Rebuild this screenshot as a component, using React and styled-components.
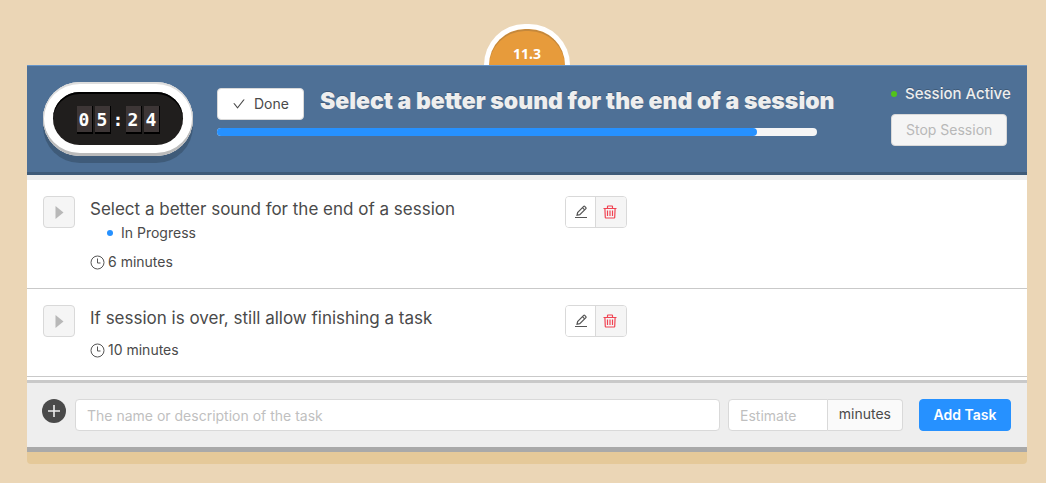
import React from "react";
import styled, { createGlobalStyle, css } from "styled-components";
import { AiOutlineCheck } from "react-icons/ai";

const GlobalStyle = createGlobalStyle`
  *, *::before, *::after { box-sizing: border-box; }
  body {
    margin: 0;
    background: #ebd6b6;
    color: #4a4a4a;
    font: 14px/22px Inter, "Liberation Sans", sans-serif;
  }
  button, input { font: inherit; margin: 0; }
  h1, h2, p, ul { margin: 0; padding: 0; }
  svg { display: block; flex: none; }
`;

const Page = styled.div`
  padding: 24px 19px 19px 27px;
`;

const VersionTab = styled.div`
  width: 86px;
  height: 41px;
  margin: 0 auto;
  padding-top: 14px;
  border: 5px solid #fff;
  border-bottom: 0;
  border-radius: 43px 43px 0 0;
  background: #e79b3b;
  box-shadow: inset 0 2px 0 #c4883c;
  color: #fff;
  font: bold 14px/22px "Noto Sans", sans-serif;
  text-align: center;
`;

const Card = styled.main`
  background: #fff;
  border-bottom: 12px solid #e5c999;
  border-radius: 0 0 4px 4px;
`;

const Header = styled.header`
  display: flex;
  align-items: flex-start;
  padding: 16px 16px 17px;
  border-top: 1px solid #6795c8;
  border-bottom: 3px solid #3f5b79;
  background: #4e7096;
`;

const ClockCase = styled.div`
  flex: none;
  width: 150px;
  margin-bottom: -1px;
  padding: 10px 10px 11px;
  border-radius: 37px;
  background: #fff;
  box-shadow: inset 0 2px 0 #ddd, inset 0 -3px 0 #bbb, inset 0 0 0 1px #ccc, 0 7px 0 #3f5b79;
`;

const ClockFace = styled.div`
  display: flex;
  align-items: center;
  justify-content: center;
  gap: 2px;
  height: 53px;
  padding-top: 2px;
  border-radius: 27px;
  background: #201e1d;
  box-shadow: inset 0 2px 0 #000;
  color: #fff;
  font: bold 18px/28px "DejaVu Sans Mono", monospace;
`;

const Digit = styled.span`
  width: 16px;
  height: 28px;
  border-right: 1px solid #000;
  border-bottom: 2px solid #000;
  background: #3d3636;
  text-align: center;
`;

const Colon = styled.span`
  width: 11px;
  height: 28px;
  text-align: center;
`;

const Current = styled.section`
  flex: 1;
  min-width: 0;
  margin-left: 24px;
  padding-top: 6px;
`;

const CurrentRow = styled.div`
  display: flex;
  gap: 16px;
`;

const CurrentTitle = styled.h1`
  color: #eee;
  font-size: 23px;
  line-height: 26px;
  font-weight: 900;
  text-shadow: 0 -1px 0 #3f5b79;
  white-space: nowrap;
`;

const Button = styled.button`
  display: inline-flex;
  align-items: center;
  justify-content: center;
  gap: 8px;
  height: 32px;
  padding: 0 14px;
  border: 1px solid #d9d9d9;
  border-radius: 4px;
  background: #fff;
  color: #4a4a4a;
  white-space: nowrap;
  ${(p) => p.$kind === "muted" && css`
    background: #f5f5f5;
    color: #b8b8b8;
  `}
  ${(p) => p.$kind === "primary" && css`
    width: 92px;
    padding: 0;
    border-color: #2691ff;
    background: #2691ff;
    color: #fff;
    font-weight: 600;
  `}
  ${(p) => p.$square && css`
    flex: none;
    width: 32px;
    padding: 0;
  `}
`;

const Track = styled.div`
  max-width: 600px;
  height: 8px;
  margin-top: 8px;
  border-radius: 4px;
  background: #f5f5f5;
`;

const Fill = styled.div`
  height: 100%;
  border-radius: 4px;
  background: #2691ff;
`;

const Session = styled.section`
  width: 120px;
`;

const SessionStatus = styled.p`
  display: flex;
  align-items: center;
  gap: 8px;
  height: 24px;
  margin-bottom: 8px;
  color: #eee;
  font-size: 15px;
  font-weight: 500;
  text-shadow: 0 -1px 0 #3f5b79;
  white-space: nowrap;
`;

const Dot = styled.span`
  flex: none;
  width: 6px;
  height: 6px;
  border-radius: 50%;
  background: ${(p) => p.$color};
`;

const TaskList = styled.ul`
  list-style: none;
  border-top: 5px solid #eee;
  padding-bottom: 3px;
`;

const TaskItem = styled.li`
  display: flex;
  align-items: flex-start;
  padding: 16px 16px 15px;
  border-bottom: 1px solid #c9c9c9;
`;

const TaskBody = styled.div`
  flex: 0 0 475px;
  margin-left: 15px;
`;

const TaskTitle = styled.h2`
  font-size: 17px;
  line-height: 26px;
  font-weight: 400;
`;

const TaskStatus = styled.p`
  display: flex;
  align-items: center;
  gap: 8px;
  padding-left: 17px;
  line-height: 21px;
`;

const Duration = styled.p`
  display: flex;
  align-items: center;
  gap: 3px;
  margin-top: 8px;
`;

const Actions = styled.div`
  display: flex;
  height: 32px;
  border: 1px solid #d9d9d9;
  border-radius: 4px;
  overflow: hidden;
`;

const Action = styled.button`
  display: flex;
  align-items: center;
  justify-content: center;
  width: 29px;
  padding: 0;
  border: 0;
  background: #fff;
  color: #555;
  ${(p) => p.$danger && css`
    width: 31px;
    padding-right: 2px;
    border-left: 1px solid #d9d9d9;
    background: #f5f5f5;
    color: #f04352;
  `}
`;

const AddForm = styled.form`
  display: flex;
  align-items: flex-start;
  padding: 16px 16px 16px 15px;
  border-top: 3px solid #c9c9c9;
  border-bottom: 5px solid #a9a9a9;
  background: #eee;
`;

const Input = styled.input`
  flex: 1;
  min-width: 0;
  height: 32px;
  padding: 0 11px;
  border: 1px solid #d9d9d9;
  border-radius: 4px;
  background: #fff;
  color: #4a4a4a;
  &::placeholder { color: #bfbfbf; opacity: 1; }
`;

const NameField = styled.label`
  display: flex;
  flex: 1;
  min-width: 0;
  gap: 9px;
`;

const Estimate = styled.label`
  display: flex;
  width: 175px;
  height: 32px;
  margin: 0 16px 0 8px;
  ${Input} { border-radius: 4px 0 0 4px; }
`;

const Unit = styled.span`
  padding: 3px 11px;
  border: 1px solid #d9d9d9;
  border-left: 0;
  border-radius: 0 4px 4px 0;
  background: #fafafa;
`;

const PlayIcon = () => (
  <svg width="16" height="16" viewBox="0 0 16 16" aria-hidden="true">
    <path d="M4.5 2 12.5 8.5 4.5 15Z" fill="currentColor" />
  </svg>
);

const ClockIcon = () => (
  <svg width="15" height="15" viewBox="0 0 15 15" fill="none" stroke="#555" aria-hidden="true">
    <circle cx="7.5" cy="7.5" r="6.5" />
    <path d="M7.5 3.5V8H10.5" />
  </svg>
);

const EditIcon = () => (
  <svg width="14" height="14" viewBox="0 0 14 14" fill="none" stroke="currentColor" strokeWidth="1.2" aria-hidden="true">
    <path d="M1 12.5H13" />
    <path d="M3 10.3 3.6 7.5 9.7 1.4Q10.2 .9 10.7 1.4L11.9 2.6Q12.4 3.1 11.9 3.6L5.8 9.7Z" />
    <path d="M8.5 2.7 10.6 4.8" />
  </svg>
);

const DeleteIcon = () => (
  <svg width="14" height="14" viewBox="0 0 14 14" fill="none" stroke="currentColor" strokeWidth="1.2" aria-hidden="true">
    <path d="M.5 3.5H13.5M4.5 3V1.5Q4.5 1 5 1H9Q9.5 1 9.5 1.5V3" />
    <path d="M1.9 3.5 2.3 12.5Q2.3 13 2.8 13H11.2Q11.7 13 11.7 12.5L12.1 3.5" />
    <path d="M4.5 5.5V11M7 5.5V11M9.5 5.5V11" />
  </svg>
);

const PlusIcon = () => (
  <svg width="24" height="24" viewBox="0 0 24 24" aria-hidden="true">
    <circle cx="12" cy="12" r="12" fill="#4a4a4a" />
    <path d="M12 6V18M6 12H18" stroke="#eee" strokeWidth="1.6" />
  </svg>
);

const tasks = [
  { title: "Select a better sound for the end of a session", status: "In Progress", minutes: 6 },
  { title: "If session is over, still allow finishing a task", minutes: 10 },
];

function Task({ title, status, minutes }) {
  return (
    <TaskItem>
      <Button $kind="muted" $square disabled aria-label="Start task">
        <PlayIcon />
      </Button>
      <TaskBody>
        <TaskTitle>{title}</TaskTitle>
        {status && (
          <TaskStatus>
            <Dot $color="#2691ff" />
            {status}
          </TaskStatus>
        )}
        <Duration>
          <ClockIcon />
          {minutes} minutes
        </Duration>
      </TaskBody>
      <Actions>
        <Action type="button" aria-label="Edit task">
          <EditIcon />
        </Action>
        <Action type="button" $danger aria-label="Delete task">
          <DeleteIcon />
        </Action>
      </Actions>
    </TaskItem>
  );
}

export default function App() {
  return (
    <Page>
      <GlobalStyle />
      <VersionTab>11.3</VersionTab>
      <Card>
        <Header>
          <ClockCase>
            <ClockFace role="timer">
              <Digit>0</Digit>
              <Digit>5</Digit>
              <Colon>:</Colon>
              <Digit>2</Digit>
              <Digit>4</Digit>
            </ClockFace>
          </ClockCase>
          <Current>
            <CurrentRow>
              <Button type="button">
                <AiOutlineCheck size={14} />
                Done
              </Button>
              <CurrentTitle>{tasks[0].title}</CurrentTitle>
            </CurrentRow>
            <Track role="progressbar" aria-valuenow={90} aria-label="Session progress">
              <Fill style={{ width: "90%" }} />
            </Track>
          </Current>
          <Session>
            <SessionStatus>
              <Dot $color="#52c41a" />
              Session Active
            </SessionStatus>
            <Button type="button" $kind="muted" disabled>
              Stop Session
            </Button>
          </Session>
        </Header>
        <TaskList>
          {tasks.map((task) => (
            <Task key={task.title} {...task} />
          ))}
        </TaskList>
        <AddForm onSubmit={(e) => e.preventDefault()}>
          <NameField>
            <PlusIcon />
            <Input aria-label="Task name" placeholder="The name or description of the task" />
          </NameField>
          <Estimate>
            <Input placeholder="Estimate" />
            <Unit>minutes</Unit>
          </Estimate>
          <Button type="submit" $kind="primary">Add Task</Button>
        </AddForm>
      </Card>
    </Page>
  );
}
